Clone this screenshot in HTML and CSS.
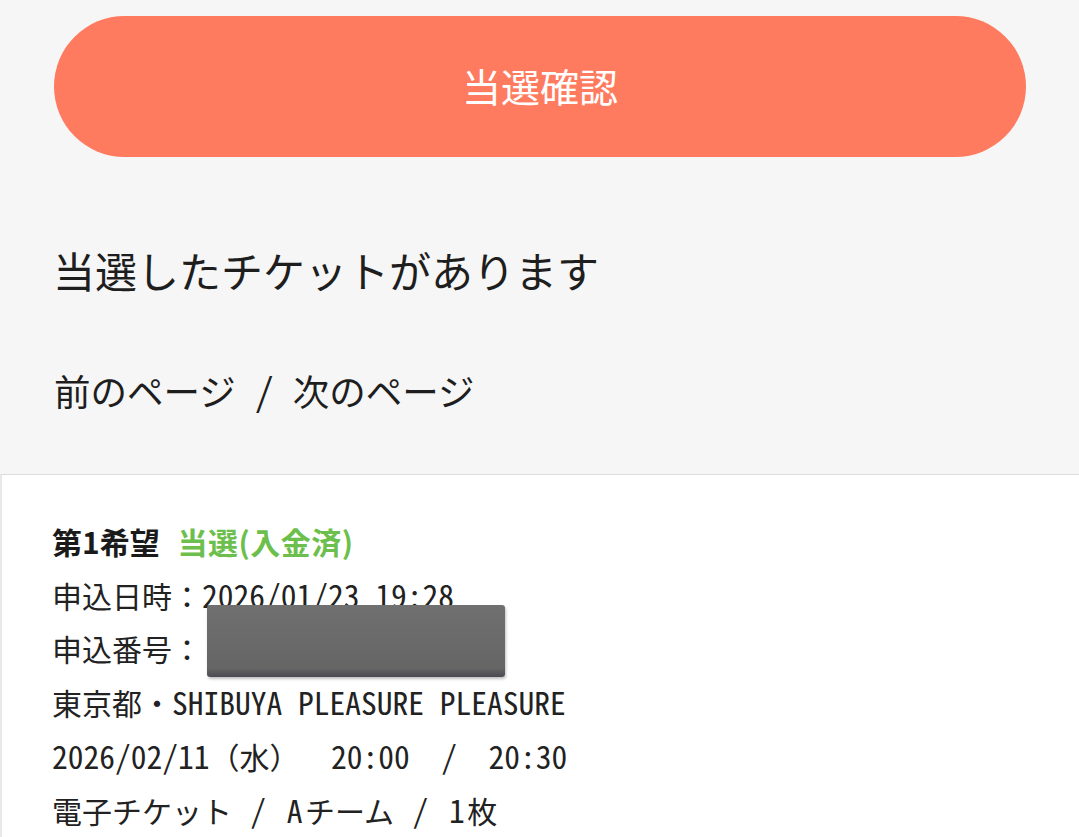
FILE: index.html
```html
<!DOCTYPE html>
<html lang="ja">
  <head>
    <meta charset="UTF-8" />
    <meta name="viewport" content="width=device-width, initial-scale=1.0" />
    <title>当選確認</title>
    <link rel="stylesheet" href="styles.css">
  </head>
  <body>
    <div class="top">
      <button class="confirm" type="button">当選確認</button>
      <h1>当選したチケットがあります</h1>
      <div class="pager">前のページ<span class="hw"> / </span>次のページ</div>
    </div>

    <div class="card">
      <div class="status">第1希望 <span class="won">当選(入金済)</span></div>
      <div class="row">申込日時：<span class="hw">2026/01/23 19:28</span></div>
      <div class="row">申込番号：</div>
      <div class="row">東京都・<span class="hw">SHIBUYA PLEASURE PLEASURE</span></div>
      <div class="row"><span class="hw">2026/02/11</span>（水）<span class="hw">  20:00  /  20:30</span></div>
      <div class="row wide">電子チケット<span class="hw"> / A</span>チーム<span class="hw"> / 1</span>枚</div>
      <div class="mask"></div>
    </div>
  </body>
</html>
```

FILE: styles.css
```css
body {
  margin: 0;
  font-family: "Noto Sans CJK JP", "Noto Sans", sans-serif;
  background-color: #f6f6f6;
  color: #222;
}

.top {
  padding: 16px 53px 57px 54px;
}

.confirm {
  display: block;
  width: 100%;
  height: 141px;
  padding-bottom: 4px;
  border: none;
  border-radius: 71px;
  background-color: #ff7b5f;
  color: #fff;
  font-family: inherit;
  font-size: 39px;
}

h1 {
  margin: 82px 0 0 -1px;
  font-size: 42px;
  font-weight: normal;
  line-height: 61px;
  color: #1e1e1e;
}

.pager {
  margin: 63px 0 0 0;
  font-size: 36.5px;
  line-height: 53px;
  color: #1e1e1e;
  white-space: pre;
}

.hw {
  font-feature-settings: "hwid" 1;
}

.pager .hw {
  font-size: 38px;
}

.card {
  position: relative;
  background-color: #fff;
  border-top: 1px solid #dcdcdc;
  border-left: 2px solid #e8e8e8;
  padding: 40px 0 40px 50px;
  min-height: 400px;
}

.status {
  font-size: 30px;
  font-weight: bold;
  line-height: 53px;
  color: #1a1a1a;
  white-space: pre;
}

.won {
  margin-left: 11px;
  letter-spacing: 0.5px;
  color: #6cbf4c;
}

.row {
  font-size: 30px;
  line-height: 53px;
  white-space: pre;
}

.row .hw {
  font-size: 31.5px;
}

.wide .hw {
  letter-spacing: 2.5px;
}

.mask {
  position: absolute;
  left: 205px;
  top: 130px;
  width: 298px;
  height: 72px;
  border-radius: 3px;
  background: linear-gradient(#707070, #656565 88%, #4a4a52);
  box-shadow: 1px 2px 3px rgba(0, 0, 0, 0.25);
}
```
